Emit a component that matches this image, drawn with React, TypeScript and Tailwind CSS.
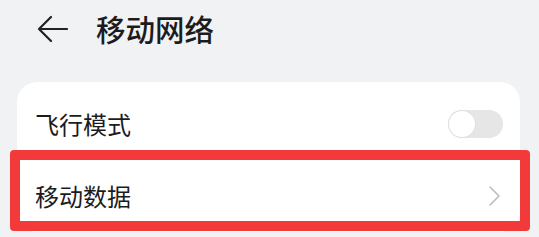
export default function App() {
  return (
    <div
      className="relative w-[539px] h-[237px] overflow-hidden bg-[#f1f2f4] text-[#1c1c1c]"
      style={{ fontFamily: '"Noto Sans CJK SC", "Noto Sans", sans-serif' }}
    >
      <div className="flex items-center h-[58px] pl-[37px]">
        <svg width="31" height="28" viewBox="0 0 31 28" fill="none" className="text-[#222]">
          <path d="M30 14H2M14 2L2 14l12 12" stroke="currentColor" strokeWidth="2.2" strokeLinecap="round" strokeLinejoin="round" />
        </svg>
        <div className="ml-[28px] text-[29.5px] font-medium leading-none">移动网络</div>
      </div>
      <div className="mt-[24px] ml-[17px] mr-[19px] rounded-[20px] bg-white pt-[6px]">
        <div className="flex items-center justify-between h-[72px] pl-[18px] pr-[17px]">
          <span className="text-[24px] leading-none">飞行模式</span>
          <div className="w-[55px] h-[28px] rounded-full bg-[#e6e6e6] p-[1px]">
            <div className="w-[26px] h-[26px] rounded-full bg-white shadow-[0_0_0_1px_#e0e0e0]" />
          </div>
        </div>
        <div className="flex items-center justify-between h-[72px] pl-[18px] pr-[20px]">
          <span className="text-[24px] leading-none">移动数据</span>
          <svg width="11" height="20" viewBox="0 0 11 20" fill="none">
            <path d="M1 1l9 9-9 9" stroke="#bdbdbd" strokeWidth="1.6" strokeLinecap="round" strokeLinejoin="round" />
          </svg>
        </div>
      </div>
      <div className="absolute left-[10px] top-[150px] w-[520px] h-[81px] rounded-[4px] border-[10px] border-[#f33a3a]" />
    </div>
  );
}
